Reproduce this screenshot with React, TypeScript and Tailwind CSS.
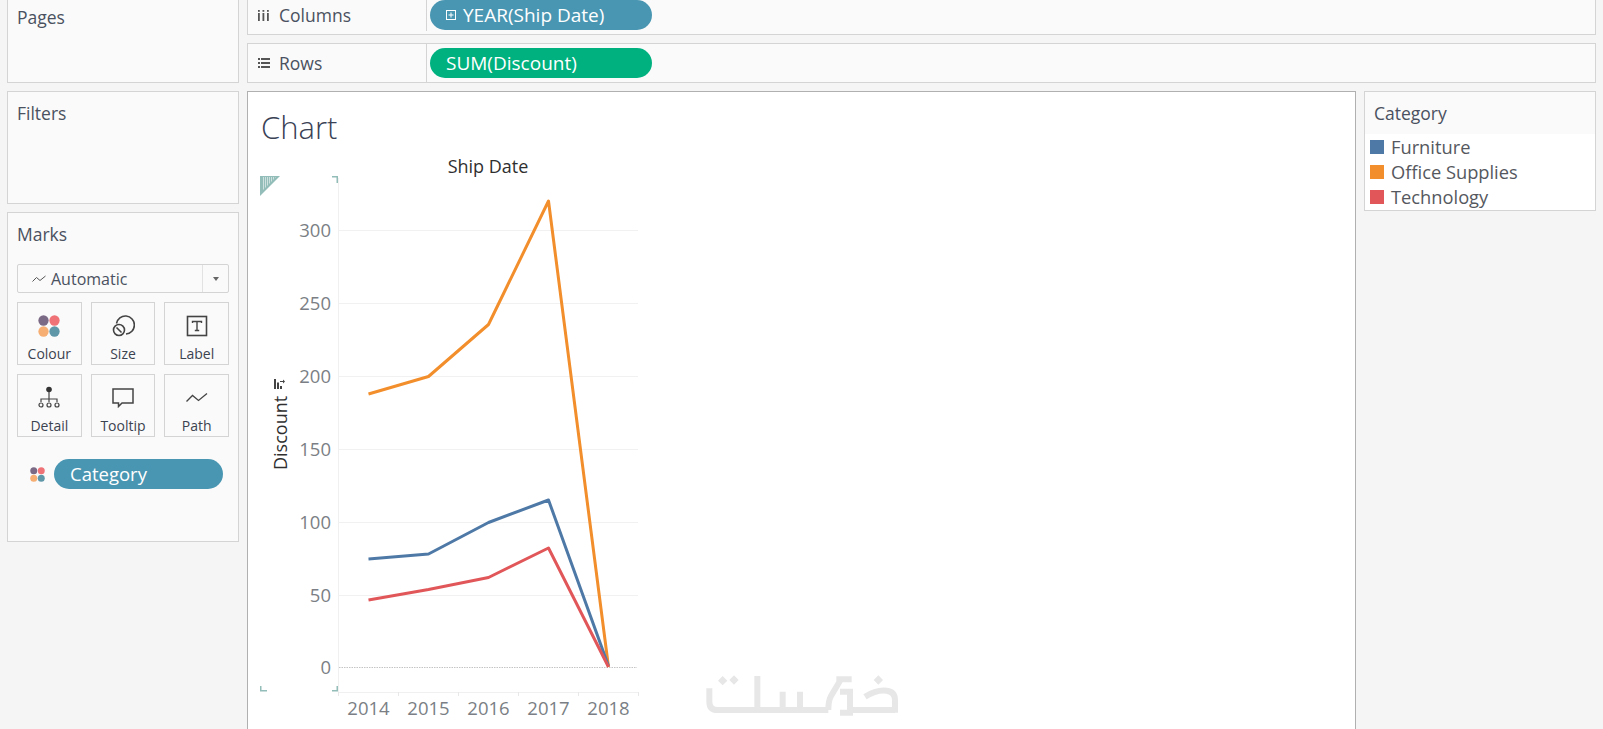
import React from 'react';

const bookFont = "font-['Open_Sans','Noto_Sans',sans-serif]";
const svgFont = "'Open Sans', sans-serif";

const Panel: React.FC<{ title: string; className: string; children?: React.ReactNode }> = ({
  title,
  className,
  children,
}) => (
  <div className={`border border-[#d4d4d4] bg-[#fafafa] px-[9px] ${className}`}>
    <div className="text-[17.5px] leading-[22px] text-[#4a5160]">{title}</div>
    {children}
  </div>
);

const ColourDots = ({ size }: { size: number }) => (
  <svg width={size} height={size} viewBox="0 0 24 24">
    <circle cx="6" cy="6" r="5.6" fill="#7b6a86" />
    <circle cx="18" cy="6" r="5.6" fill="#ef7277" />
    <circle cx="6" cy="18" r="5.6" fill="#f6ae73" />
    <circle cx="18" cy="18" r="5.6" fill="#5f97a9" />
  </svg>
);

const SizeIcon = () => (
  <svg width="24" height="24" viewBox="0 0 24 24" fill="none" stroke="#444" strokeWidth="1.6">
    <path d="M5.5 9.5A9 9 0 1 1 15 20" />
    <circle cx="8" cy="16" r="5.5" />
    <path d="M5.5 13.5l5 5" />
  </svg>
);

const LabelIcon = () => (
  <svg width="22" height="22" viewBox="0 0 22 22" fill="none" stroke="#444">
    <rect x="1.5" y="1.5" width="19" height="19" strokeWidth="1.6" />
    <path d="M6.5 8V6.5h9V8M11 6.5v9M8.8 15.5h4.4" strokeWidth="1.4" />
  </svg>
);

const DetailIcon = () => (
  <svg width="22" height="24" viewBox="0 0 22 24" fill="none" stroke="#444" strokeWidth="1.2">
    <circle cx="11" cy="3.500" r="2.800" fill="#333" stroke="none" />
    <path d="M11 6v10M3 16v-3h16v3" />
    <circle cx="3" cy="19" r="2" />
    <circle cx="11" cy="19" r="2" />
    <circle cx="19" cy="19" r="2" />
  </svg>
);

const TooltipIcon = () => (
  <svg width="22" height="20" viewBox="0 0 22 20" fill="none" stroke="#444" strokeWidth="1.5">
    <path d="M1 1h20v14H10l-3.500 3.500V15H1z" />
  </svg>
);

const PathIcon = () => (
  <svg width="22" height="12" viewBox="0 0 22 12" fill="none" stroke="#444" strokeWidth="1.3">
    <path d="M0.500 9.500l6-6 6 5 8.500-7" />
  </svg>
);

const markCards: { label: string; icon: React.ReactNode }[] = [
  { label: 'Colour', icon: <ColourDots size={22} /> },
  { label: 'Size', icon: <SizeIcon /> },
  { label: 'Label', icon: <LabelIcon /> },
  { label: 'Detail', icon: <DetailIcon /> },
  { label: 'Tooltip', icon: <TooltipIcon /> },
  { label: 'Path', icon: <PathIcon /> },
];

const MarksCard: React.FC<{ label: string; icon: React.ReactNode }> = ({ label, icon }) => (
  <div className="flex h-[63px] flex-col items-center border border-[#d4d4d4]">
    <div className="flex h-[42px] items-center justify-center pt-[3px]">{icon}</div>
    <div className="text-[14px] leading-[18px] text-[#3c4350]">{label}</div>
  </div>
);

const ShelfRow: React.FC<{ icon: React.ReactNode; label: string; className: string; children: React.ReactNode }> = ({
  icon,
  label,
  className,
  children,
}) => (
  <div className={`flex border border-[#d4d4d4] bg-[#fafafa] ${className}`}>
    <div className="flex w-[179px] shrink-0 items-center border-r border-[#d4d4d4] pl-[10px]">
      <span className="flex w-[21px] justify-start">{icon}</span>
      <span className="text-[17.5px] text-[#4a5160]">{label}</span>
    </div>
    {children}
  </div>
);

const X = [368.5, 428.5, 488.5, 548.5, 608.5];
const series = [
  { color: '#f28e2b', ys: [394, 376.5, 324.5, 201, 667] },
  { color: '#4e79a7', ys: [559, 554, 522.5, 500, 666] },
  { color: '#e15759', ys: [600, 589.5, 577.5, 548, 667] },
];
const yTicks = [
  { v: 300, y: 230.5 },
  { v: 250, y: 303.5 },
  { v: 200, y: 376.5 },
  { v: 150, y: 449.5 },
  { v: 100, y: 522.5 },
  { v: 50, y: 595.5 },
];

// chart svg coordinates are page coordinates shifted by the panel origin (248, 92)
const LineChart = () => (
  <svg width="420" height="637" viewBox="248 92 420 637" className="absolute left-0 top-0">
    {yTicks.map((t) => (
      <line key={t.v} x1="339" x2="638" y1={t.y} y2={t.y} stroke="#f1f1f1" />
    ))}
    <line x1="338.5" x2="338.5" y1="178" y2="692" stroke="#f0f0f0" />
    <line x1="338" x2="639" y1="692.500" y2="692.500" stroke="#f0f0f0" />
    {[338.5, 398.5, 458.5, 518.5, 578.5, 638.5].map((x) => (
      <line key={x} x1={x} x2={x} y1="692" y2="696" stroke="#e8e8e8" />
    ))}
    <line x1="339" x2="637" y1="667.500" y2="667.500" stroke="#c4c4c4" strokeDasharray="1.500 1" />

    <g fill="#93bdb8">
      <path d="M260 176h20l-20 20z" />
      <path d="M332 176h6v7h-1.500v-5.500H332z" />
      <path d="M260 686h1.500v4H267v1.500h-7z" />
      <path d="M332 690h4.500v-4h1.500v5.500h-6z" />
    </g>
    <g stroke="#ffffff" strokeOpacity="0.55" strokeWidth="1">
      {[263.5, 265.5, 267.5, 269.5, 271.5, 273.5, 275.5].map((x) => (
        <line key={x} x1={x} x2={x} y1="177" y2={176 + (280 - x) - 3} />
      ))}
    </g>

    {series.map((s) => (
      <polyline
        key={s.color}
        points={X.map((x, i) => `${x},${s.ys[i]}`).join(' ')}
        fill="none"
        stroke={s.color}
        strokeWidth="3"
        strokeLinejoin="round"
      />
    ))}

    <g fontFamily={svgFont} fontSize="18.500" fill="#7b7f85" textAnchor="end">
      {yTicks.map((t) => (
        <text key={t.v} x="331" y={t.y + 6.5}>
          {t.v}
        </text>
      ))}
      <text x="331" y="674">
        0
      </text>
    </g>
    <g fontFamily={svgFont} fontSize="18.500" fill="#7b7f85" textAnchor="middle">
      {[2014, 2015, 2016, 2017, 2018].map((year, i) => (
        <text key={year} x={X[i]} y="715">
          {year}
        </text>
      ))}
    </g>
    <text x="488" y="173" fontFamily={svgFont} fontSize="18" fill="#2f2f2f" textAnchor="middle">
      Ship Date
    </text>
    <text transform="translate(287 470) rotate(-90)" fontFamily={svgFont} fontSize="18" fill="#2f2f2f">
      Discount
    </text>
    <g fill="#444" transform="translate(274 379)">
      <rect x="0" y="0" width="2" height="10" />
      <rect x="3" y="3.500" width="2" height="6.500" />
      <rect x="6" y="7" width="2" height="3" />
      <path d="M6 2h3V0.500L11 2.500 9 4.500V3H6z" />
    </g>
  </svg>
);

// faded site logo over the bottom of the view
const Watermark = () => (
  <svg
    width="240"
    height="79"
    viewBox="0 0 720 237"
    className="absolute left-[432px] top-[558px]"
    fill="none"
    stroke="#e7e7e7"
    strokeWidth="18"
  >
    <path d="M88 115v40q0 25 25 25h119" />
    <path d="M232 78v110" />
    <path d="M232 180h213" />
    <path d="M308 125v55M360 125v55" />
    <path d="M445 180q0-28 8-42l25-42v-8h37" />
    <path d="M480 125h30v63h-30" />
    <path d="M510 180h135" />
    <path d="M555 140q35-22 65-18q25 3 25 28v38" />
    <path d="M128 78l14 14-14 14-14-14zM162 76l14 14-14 14-14-14zM595 76l14 14-14 14-14-14z" fill="#e7e7e7" stroke="none" />
  </svg>
);

export default function App() {
  return (
    <div className={`flex h-[729px] w-[1603px] gap-[8px] overflow-hidden bg-[#f5f5f5] pl-[7px] ${bookFont}`}>
      <div className="flex w-[232px] shrink-0 flex-col gap-[8px]">
        <Panel title="Pages" className="h-[83px] border-t-0 pt-[6px]" />
        <Panel title="Filters" className="h-[113px] pt-[10px]" />
        <Panel title="Marks" className="h-[330px] pt-[10px]">
          <div className="mt-[19px] flex h-[29px] w-[212px] items-center rounded-[2px] border border-[#d4d4d4] bg-[#fafafa]">
            <div className="flex flex-1 items-center gap-[5px] pl-[14px] text-[16px] text-[#4a5160]">
              <svg width="14" height="8" viewBox="0 0 14 8" fill="none" stroke="#555" strokeWidth="1">
                <path d="M0.500 6.500l4-4 3.500 3 5.500-4.500" />
              </svg>
              Automatic
            </div>
            <div className="flex h-full w-[26px] items-center justify-center border-l border-[#e2e2e2]">
              <div className="h-0 w-0 border-x-[3.500px] border-t-[4px] border-x-transparent border-t-[#666]" />
            </div>
          </div>
          <div className="mt-[9px] grid w-[212px] grid-cols-3 gap-[9px]">
            {markCards.map((card) => (
              <MarksCard key={card.label} label={card.label} icon={card.icon} />
            ))}
          </div>
          <div className="mt-[22px] flex items-center gap-[9px] pl-[13px]">
            <ColourDots size={15} />
            <div className="flex h-[30px] w-[169px] items-center rounded-full bg-[#4996b2] pl-[16px] text-[18.5px] text-white">
              Category
            </div>
          </div>
        </Panel>
      </div>

      <div className="flex flex-1 flex-col gap-[8px] pr-[7px]">
        <ShelfRow
          label="Columns"
          className="h-[35px] border-t-0 pb-[3px]"
          icon={
            <svg width="11" height="11" viewBox="0 0 11 11" fill="#555">
              <rect x="0" y="3" width="1.800" height="8" />
              <rect x="4.500" y="3" width="1.800" height="8" />
              <rect x="9" y="3" width="1.800" height="8" />
              <rect x="0" y="0" width="1.800" height="1.800" />
              <rect x="4.500" y="0" width="1.800" height="1.800" />
              <rect x="9" y="0" width="1.800" height="1.800" />
            </svg>
          }
        >
          <div className="ml-[3px] flex h-[30px] w-[222px] items-center rounded-full bg-[#4996b2] pl-[16px] text-[19px] text-white">
            <svg width="10" height="10" viewBox="0 0 10 10" fill="none" stroke="#fff" className="mr-[7px]">
              <rect x="0.500" y="0.500" width="9" height="9" />
              <path d="M2.500 5h5M5 2.500v5" />
            </svg>
            YEAR(Ship Date)
          </div>
        </ShelfRow>
        <ShelfRow
          label="Rows"
          className="h-[40px]"
          icon={
            <svg width="12" height="10" viewBox="0 0 12 10" fill="#555">
              <rect x="0" y="0" width="2" height="2" />
              <rect x="0" y="4" width="2" height="2" />
              <rect x="0" y="8" width="2" height="2" />
              <rect x="3" y="0" width="9" height="2" />
              <rect x="3" y="4" width="9" height="2" />
              <rect x="3" y="8" width="9" height="2" />
            </svg>
          }
        >
          <div className="ml-[3px] mt-[4px] flex h-[30px] w-[222px] items-center rounded-full bg-[#00b180] pl-[16px] text-[19px] text-white">
            SUM(Discount)
          </div>
        </ShelfRow>

        <div className="flex flex-1 gap-[8px]">
          <div className="relative w-[1109px] border border-b-0 border-[#b0b0b0] bg-white">
            <div className="pl-[13px] pt-[15px] text-[31px] font-light leading-[40px] text-[#3a4256]">Chart</div>
            <LineChart />
            <Watermark />
          </div>
          <div className="h-[120px] flex-1 border border-[#d4d4d4] bg-white">
            <div className="flex h-[42px] items-center bg-[#fafafa] pl-[9px] text-[17.5px] text-[#4a5160]">Category</div>
            <div className="flex flex-col gap-[4px] pl-[5px] pt-[2px]">
              {[
                { name: 'Furniture', color: 'bg-[#4e79a7]' },
                { name: 'Office Supplies', color: 'bg-[#f28e2b]' },
                { name: 'Technology', color: 'bg-[#e15759]' },
              ].map((item) => (
                <div key={item.name} className="flex h-[21px] items-center gap-[7px] text-[18.3px] text-[#55585e]">
                  <span className={`h-[14px] w-[14px] ${item.color}`} />
                  {item.name}
                </div>
              ))}
            </div>
          </div>
        </div>
      </div>
    </div>
  );
}
